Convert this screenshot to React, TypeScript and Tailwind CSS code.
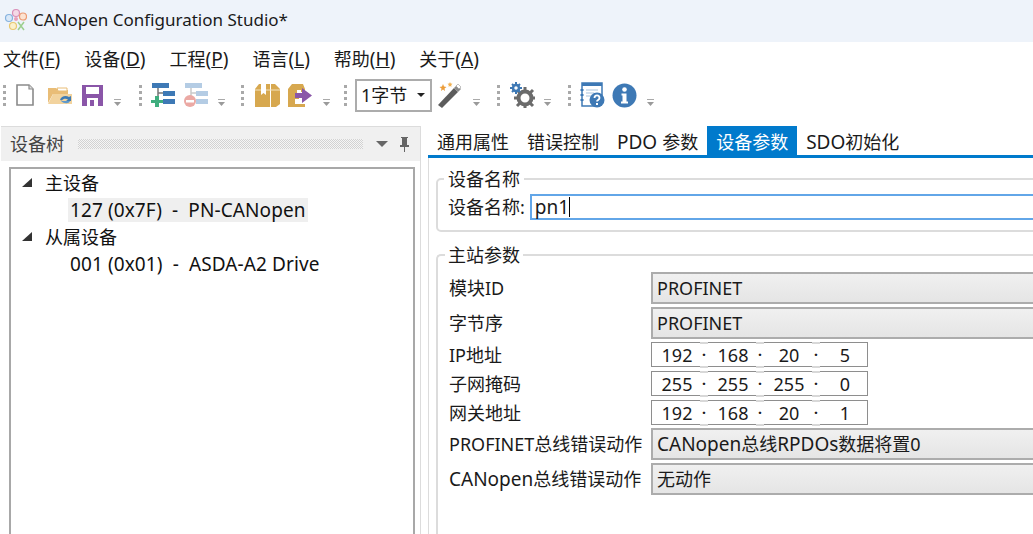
import type { ReactNode } from 'react'

const font = "font-['Noto_Sans','Noto_Sans_CJK_SC',sans-serif]"

// latin runs are a touch larger than the CJK around them
function L({ children }: { children: ReactNode }) {
  return <span className="text-[19px]">{children}</span>
}

function Grip() {
  return (
    <div className="flex flex-col gap-[3px] w-[3px] mx-[2px]">
      <i className="block w-[3px] h-[3px] bg-[#a9a9a9]" />
      <i className="block w-[3px] h-[3px] bg-[#a9a9a9]" />
      <i className="block w-[3px] h-[3px] bg-[#a9a9a9]" />
      <i className="block w-[3px] h-[3px] bg-[#a9a9a9]" />
    </div>
  )
}

function Drop() {
  return (
    <svg width="9" height="8" viewBox="0 0 9 8" className="self-end">
      <rect x="1" y="0" width="7" height="1" fill="#aaa" />
      <path d="M1 3h7L4.500 7z" fill="#9a9a9a" />
    </svg>
  )
}

function NewFile() {
  return (
    <svg width="20" height="24" viewBox="0 0 20 24">
      <path d="M2 2h12l4 4v16H2z" fill="#fff" stroke="#8a8a8a" strokeWidth="1.600" />
      <path d="M14 2v4h4" fill="#ddd" stroke="#8a8a8a" strokeWidth="1.200" />
    </svg>
  )
}

function OpenFolder() {
  return (
    <svg width="26" height="22" viewBox="0 0 26 22">
      <path d="M1 4h8l2 2h10v4H6L1 19z" fill="#e9bd77" />
      <path d="M10 4h10v3H11z" fill="#fff" stroke="#e9bd77" />
      <path d="M1 20l5-10h19v10z" fill="#f2d39e" />
      <path d="M13 16c1-4 6-5 9-3l2-1v5h-5l2-1.500c-2-1.500-5-1-6 1z" fill="#3f7cb5" />
      <path d="M14 17h9c-1 3-6 3-9 0z" fill="#5f99cc" />
    </svg>
  )
}

function Save() {
  return (
    <svg width="23" height="23" viewBox="0 0 23 23">
      <path d="M1 1h21v21H1z" fill="#8a56a8" />
      <rect x="5" y="3" width="13" height="7" fill="#fff" />
      <rect x="6" y="14" width="11" height="8" fill="#fff" />
      <rect x="9" y="16" width="4" height="6" fill="#8a56a8" />
    </svg>
  )
}

function TreeAdd({ faded }: { faded?: boolean }) {
  const main = faded ? '#b4cce4' : '#3e79b5'
  const line = faded ? '#c9c9c9' : '#777'
  return (
    <svg width="24" height="24" viewBox="0 0 24 24">
      <rect x="1" y="0" width="17" height="5" fill={main} />
      <path d="M7 5v5h5M7 10v3" stroke={line} strokeWidth="1.500" fill="none" />
      <rect x="12" y="8" width="12" height="5" fill={main} />
      <rect x="12" y="16" width="12" height="5" fill={main} />
      {faded ? (
        <>
          <circle cx="6" cy="18" r="6" fill="#eba9a4" />
          <rect x="2" y="17" width="8" height="2.500" fill="#fff" />
        </>
      ) : (
        <path d="M4 13h4v4h4v3H8v4H4v-4H0v-3h4z" fill="#3fae7e" />
      )}
    </svg>
  )
}

function Box() {
  return (
    <svg width="25" height="23" viewBox="0 0 25 23">
      <path d="M0 5l4-5h11v23H0z" fill="#d7a84f" />
      <path d="M16 0h4l5 5v15l-4 3h-5z" fill="#d7a84f" />
      <path d="M6 0h5v11l-2.500-2L6 11z" fill="#fff" />
      <path d="M0 6h6M11 6h14" stroke="#f4e3bf" strokeWidth="1" />
    </svg>
  )
}

function BoxExport() {
  return (
    <svg width="25" height="23" viewBox="0 0 25 23">
      <path d="M0 5l4-5h11l2 5v3h-4V6H9v4h2v5H7v5h10v3H0z" fill="#d7a84f" />
      <path d="M7 9h7V4l10 7.500L14 19v-5H7z" fill="#8a56a8" />
    </svg>
  )
}

function Wand() {
  return (
    <svg width="26" height="26" viewBox="0 0 26 26">
      <path d="M1 23L17 6l4 4L5 26z" fill="#5c5c5c" />
      <path d="M17 6l3-3 4 4-3 3z" fill="#8a8a8a" />
      <path d="M19 4l2-2 3 3-2 2z" fill="#fff" stroke="#999" strokeWidth="0.600" />
      <path d="M6 2l1 2.500 2.500.5-2 1.500.5 2.500-2-1.500-2 1.500.5-2.500-2-1.500L5 4.500z" fill="#ec9d3a" />
      <path d="M13 0l.7 1.500 1.800.3-1.300 1.200.3 1.700-1.500-.8-1.500.8.3-1.700-1.300-1.200 1.800-.3z" fill="#f0b050" />
    </svg>
  )
}

function Gears() {
  return (
    <svg width="25" height="26" viewBox="0 0 25 26">
      <circle cx="15" cy="16" r="6.500" fill="none" stroke="#6b6b6b" strokeWidth="4" />
      <path d="M15 5v4M15 23v4M4 16h4M22 16h4M7 8l3 3M20 21l3 3M23 8l-3 3M10 21l-3 3" stroke="#6b6b6b" strokeWidth="3" />
      <circle cx="6" cy="6" r="3" fill="none" stroke="#3e79b5" strokeWidth="2.500" />
      <path d="M6 0v2M6 10v2M0 6h2M10 6h2M2 2l1.500 1.500M10 2L8.500 3.500M2 10l1.500-1.500M10 10L8.500 8.500" stroke="#3e79b5" strokeWidth="2" />
    </svg>
  )
}

function HelpDoc() {
  return (
    <svg width="25" height="26" viewBox="0 0 25 26">
      <path d="M2 1h20v12h-8v11H2z" fill="#fff" stroke="#3e79b5" strokeWidth="1.500" />
      <rect x="2" y="1" width="20" height="3" fill="#3e79b5" />
      <path d="M6 8h12M6 11h8M6 14h5" stroke="#aac4dd" strokeWidth="1.200" />
      <path d="M2 7v2M2 12v2M2 17v2" stroke="#3e79b5" strokeWidth="3" />
      <circle cx="17" cy="18" r="7.500" fill="#3e79b5" />
      <path d="M14.500 16c0-3.500 5-3.500 5 0 0 2-2.500 2-2.500 3.500" stroke="#fff" strokeWidth="1.800" fill="none" />
      <rect x="16" y="21" width="2" height="2" fill="#fff" />
    </svg>
  )
}

function Info() {
  return (
    <svg width="25" height="25" viewBox="0 0 25 25">
      <circle cx="12.500" cy="12.500" r="12" fill="#3e79b5" />
      <circle cx="12.500" cy="6.500" r="2.300" fill="#fff" />
      <path d="M9.500 10.500h5v8h1.500v2h-7v-2h1.500v-6h-1z" fill="#fff" />
    </svg>
  )
}

function Logo() {
  return (
    <svg width="24" height="24" viewBox="0 0 24 24">
      <circle cx="13" cy="5" r="3.500" fill="#f4d9e6" stroke="#d98fb8" strokeWidth="1.200" />
      <circle cx="20" cy="8.500" r="3.500" fill="#fce3d2" stroke="#ec9b74" strokeWidth="1.200" />
      <circle cx="6" cy="10" r="3.500" fill="#d9e8f8" stroke="#86b2de" strokeWidth="1.200" />
      <circle cx="13" cy="11" r="2" fill="#e9a0b9" />
      <circle cx="10" cy="18" r="3.500" fill="#fbf1cc" stroke="#e8c86f" strokeWidth="1.200" />
      <path d="M15 14l6 8M21 14l-6 8" stroke="#9ccf8f" strokeWidth="1.500" />
    </svg>
  )
}

function TreeHead({ label }: { label: string }) {
  return (
    <div className="h-[27px] flex items-center pl-[11px]">
      <svg width="10" height="9" viewBox="0 0 10 9">
        <path d="M10 0v9H0z" fill="#333" />
      </svg>
      <span className="ml-[13px]">{label}</span>
    </div>
  )
}

function TreeLeaf({ label, on }: { label: string; on?: boolean }) {
  return (
    <div className="h-[27px] flex items-center pl-[57px]">
      <span className={`h-[24px] leading-[24px] px-[2px] text-[19px] tracking-[0.1px] whitespace-pre ${on ? 'bg-[#efefef]' : ''}`}>{label}</span>
    </div>
  )
}

function Tab({ children, on }: { children: ReactNode; on?: boolean }) {
  return (
    <div className={`h-[29px] px-[9px] leading-[32px] whitespace-nowrap ${on ? 'bg-[#007acc] text-white' : ''}`}>
      {children}
    </div>
  )
}

function Combo({ children }: { children: ReactNode }) {
  return (
    <div className="h-[32px] flex-1 border-2 border-[#acacac] bg-linear-to-b from-[#f0f0f0] to-[#e5e5e5] pl-[4px] flex items-center whitespace-pre">
      <span>{children}</span>
    </div>
  )
}

function IpBox({ parts }: { parts: string[] }) {
  return (
    <div className="w-[217px] h-[25px] border-[1.500px] border-[#8e8e8e] flex items-center bg-white">
      {parts.map((p, i) => (
        <div key={i} className="flex items-center">
          <span className="w-[48px] text-center pl-[2px]">{p}</span>
          {i < 3 && (
            <span className="relative w-[8px] h-[22px] text-center text-[14px] font-bold leading-[22px]">
              ·
              <i className="absolute left-0 top-[-2px] w-[8px] h-[2px] bg-[#d8d8d8]" />
              <i className="absolute left-0 bottom-[-2px] w-[8px] h-[2px] bg-[#d8d8d8]" />
            </span>
          )}
        </div>
      ))}
    </div>
  )
}

function Row({ label, children, mb }: { label: ReactNode; children: ReactNode; mb: string }) {
  return (
    <div className={`flex items-center ${mb}`}>
      <div className="w-[202px] shrink-0 whitespace-nowrap">{label}</div>
      {children}
    </div>
  )
}

export default function App() {
  return (
    <div className={`${font} w-[1033px] h-[534px] overflow-hidden bg-white text-[18px] leading-[24px] text-[#1a1a1a] flex flex-col`}>
      {/* title bar */}
      <div className="h-[42px] shrink-0 bg-[#eef3fa] flex items-center pl-[3px] pb-[2px] text-[17px]">
        <Logo />
        <span className="ml-[6px]">CANopen Configuration Studio*</span>
      </div>

      {/* menu */}
      <div className="h-[34px] shrink-0 flex items-center pl-[3px] gap-[24px]">
        <span>文件<L>(<u>F</u>)</L></span>
        <span>设备<L>(<u>D</u>)</L></span>
        <span>工程<L>(<u>P</u>)</L></span>
        <span>语言<L>(<u>L</u>)</L></span>
        <span>帮助<L>(<u>H</u>)</L></span>
        <span>关于<L>(<u>A</u>)</L></span>
      </div>

      {/* toolbar */}
      <div className="h-[38px] shrink-0 flex items-center pl-[1px]">
        <Grip />
        <div className="ml-[7px]"><NewFile /></div>
        <div className="ml-[12px]"><OpenFolder /></div>
        <div className="ml-[8px]"><Save /></div>
        <div className="ml-[9px] h-[24px] flex"><Drop /></div>
        <div className="ml-[15px]"><Grip /></div>
        <div className="ml-[7px]"><TreeAdd /></div>
        <div className="ml-[9px]"><TreeAdd faded /></div>
        <div className="ml-[9px] h-[24px] flex"><Drop /></div>
        <div className="ml-[13px]"><Grip /></div>
        <div className="ml-[9px]"><Box /></div>
        <div className="ml-[8px]"><BoxExport /></div>
        <div className="ml-[9px] h-[24px] flex"><Drop /></div>
        <div className="ml-[11px]"><Grip /></div>
        <div className="ml-[6px] w-[77px] h-[33px] border-2 border-[#acacac] flex items-center pl-[4px] justify-between pr-[5px]">
          <span>1字节</span>
          <svg width="8" height="4" viewBox="0 0 8 4"><path d="M0 0h8L4 4z" fill="#222" /></svg>
        </div>
        <div className="ml-[5px]"><Wand /></div>
        <div className="ml-[9px] h-[24px] flex"><Drop /></div>
        <div className="ml-[14px]"><Grip /></div>
        <div className="ml-[8px]"><Gears /></div>
        <div className="ml-[8px] h-[24px] flex"><Drop /></div>
        <div className="ml-[14px]"><Grip /></div>
        <div className="ml-[7px]"><HelpDoc /></div>
        <div className="ml-[7px]"><Info /></div>
        <div className="ml-[9px] h-[24px] flex"><Drop /></div>
      </div>

      {/* body */}
      <div className="flex-1 min-h-0 flex pt-[12px]">
        {/* device tree panel */}
        <div className="w-[420px] shrink-0 ml-[1px] border-r border-t border-[#dcdcdc] flex flex-col">
          <div className="h-[34px] shrink-0 bg-[#f0f0f0] flex items-center pl-[9px] text-[#444]">
            <span>设备树</span>
            <div className="ml-[14px] w-[285px] h-[10px] bg-[repeating-conic-gradient(#d2d2d2_0%_25%,#f5f5f5_0%_50%)] bg-[length:2px_2px]" />
            <svg width="12" height="6" viewBox="0 0 12 6" className="ml-[13px]"><path d="M0 0h12L6 6z" fill="#666" /></svg>
            <svg width="11" height="15" viewBox="0 0 11 15" className="ml-[11px]">
              <path d="M2 0h7v1H8v7h2v2H6v5H5v-5H1V8h2V1H2z" fill="#666" />
            </svg>
          </div>
          <div className="flex-1 mt-[6px] ml-[8px] mr-[5px] border-2 border-b-0 border-[#a8a8a8] text-[#111]">
            <TreeHead label="主设备" />
            <TreeLeaf label="127 (0x7F)  -  PN-CANopen" on />
            <TreeHead label="从属设备" />
            <TreeLeaf label="001 (0x01)  -  ASDA-A2 Drive" />
          </div>
        </div>

        {/* right side */}
        <div className="w-[605px] shrink-0 ml-[7px] flex flex-col overflow-hidden">
          <div className="flex h-[29px] shrink-0">
            <Tab>通用属性</Tab>
            <Tab>错误控制</Tab>
            <Tab><L>PDO </L>参数</Tab>
            <Tab on>设备参数</Tab>
            <Tab><L>SDO</L>初始化</Tab>
          </div>
          <div className="h-[3px] shrink-0 bg-[#007acc]" />
          <div className="flex-1 border-l border-[#dcdcdc] pl-[1px] pt-[11px] w-[700px]">
            <fieldset className="ml-[6px] h-[63px] border-2 border-[#dcdcdc] rounded-[5px] pl-[6px]">
              <legend className="px-[4px] leading-[20px]">设备名称</legend>
              <div className="flex items-center h-[27px] pl-[4px] mt-[4px]">
                <span>设备名称:</span>
                <div className="ml-[5px] flex-1 h-[26px] border-2 border-[#62a6e8] flex items-center pl-[3px] text-[19px]">
                  pn1<i className="block w-px h-[20px] bg-black" />
                </div>
              </div>
            </fieldset>
            <fieldset className="ml-[6px] mt-[13px] h-[300px] border-2 border-[#dcdcdc] border-r-0 border-b-0 rounded-tl-[5px] pl-[7px] pt-[7px]">
              <legend className="px-[3px] leading-[20px]">主站参数</legend>
              <div className="pl-[4px]">
                <Row label="模块ID" mb="mb-[3px]"><Combo>PROFINET</Combo></Row>
                <Row label="字节序" mb="mb-[3px]"><Combo>PROFINET</Combo></Row>
                <Row label="IP地址" mb="mb-[4px]"><IpBox parts={['192', '168', '20', '5']} /></Row>
                <Row label="子网掩码" mb="mb-[4px]"><IpBox parts={['255', '255', '255', '0']} /></Row>
                <Row label="网关地址" mb="mb-[3px]"><IpBox parts={['192', '168', '20', '1']} /></Row>
                <Row label="PROFINET总线错误动作" mb="mb-[3px]"><Combo><L>CANopen</L>总线<L>RPDOs</L>数据将置0</Combo></Row>
                <Row label={<><L>CANopen</L>总线错误动作</>} mb="mb-[3px]"><Combo>无动作</Combo></Row>
              </div>
            </fieldset>
          </div>
        </div>
      </div>
    </div>
  )
}
